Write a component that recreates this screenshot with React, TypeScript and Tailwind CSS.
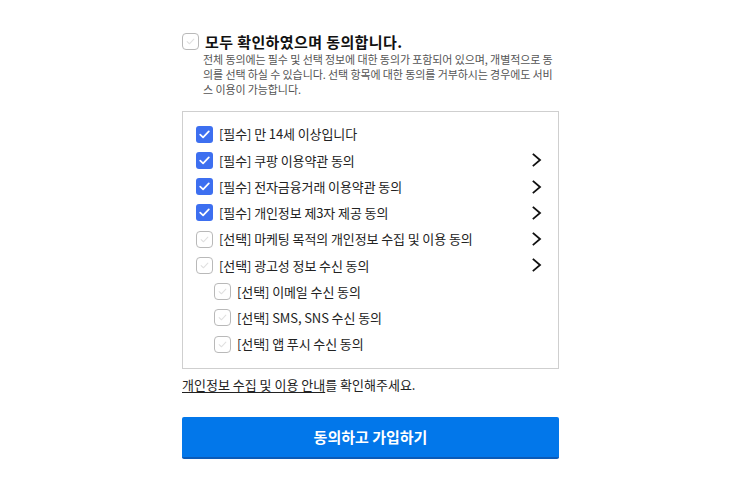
type Item = { label: string; tag: string; checked: boolean; arrow: boolean; sub?: boolean };

const ITEMS: Item[] = [
  { tag: '[필수]', label: '만 14세 이상입니다', checked: true, arrow: false },
  { tag: '[필수]', label: '쿠팡 이용약관 동의', checked: true, arrow: true },
  { tag: '[필수]', label: '전자금융거래 이용약관 동의', checked: true, arrow: true },
  { tag: '[필수]', label: '개인정보 제3자 제공 동의', checked: true, arrow: true },
  { tag: '[선택]', label: '마케팅 목적의 개인정보 수집 및 이용 동의', checked: false, arrow: true },
  { tag: '[선택]', label: '광고성 정보 수신 동의', checked: false, arrow: true },
  { tag: '[선택]', label: '이메일 수신 동의', checked: false, arrow: false, sub: true },
  { tag: '[선택]', label: 'SMS, SNS 수신 동의', checked: false, arrow: false, sub: true },
  { tag: '[선택]', label: '앱 푸시 수신 동의', checked: false, arrow: false, sub: true },
];

function Box({ checked }: { checked: boolean }) {
  if (checked) {
    return (
      <span className="flex h-[17px] w-[17px] shrink-0 items-center justify-center rounded-[3px] bg-[#3d6ff0]">
        <svg width="11" height="9" viewBox="0 0 11 9" fill="none">
          <path d="M1.2 4.6 4.1 7.4 9.8 1.4" stroke="white" strokeWidth="1.7" strokeLinecap="round" strokeLinejoin="round" />
        </svg>
      </span>
    );
  }
  return (
    <span className="flex h-[17px] w-[17px] shrink-0 items-center justify-center rounded-[4px] border border-[#b9b9b9] bg-white">
      <svg width="9" height="7" viewBox="0 0 11 9" fill="none">
        <path d="M1.2 4.6 4.1 7.4 9.8 1.4" stroke="#e0e0e0" strokeWidth="1.4" strokeLinecap="round" strokeLinejoin="round" />
      </svg>
    </span>
  );
}

function Chevron() {
  return (
    <svg width="10" height="14" viewBox="0 0 10 14" fill="none" className="shrink-0">
      <path d="M1.5 1.5 8 7 1.5 12.5" stroke="#111" strokeWidth="1.8" strokeLinecap="square" strokeLinejoin="miter" />
    </svg>
  );
}

export default function App() {
  return (
    <div className="min-h-[481px] bg-white text-[#111] [font-family:'Noto_Sans_CJK_KR','Noto_Sans',sans-serif]">
      <div className="ml-[182px] w-[377px] pt-[33px]">
        <div className="flex items-center">
          <Box checked={false} />
          <span className="ml-[6px] text-[15px] font-bold leading-[17px] tracking-[0.4px] text-[#111]">모두 확인하였으며 동의합니다.</span>
        </div>
        <p className="mt-[2px] ml-[21px] text-[11px] leading-[15px] tracking-[-0.1px] text-[#555]">
          전체 동의에는 필수 및 선택 정보에 대한 동의가 포함되어 있으며, 개별적으로 동의를 선택 하실 수 있습니다. 선택 항목에 대한 동의를 거부하시는 경우에도 서비스 이용이 가능합니다.
        </p>

        <div className="mt-[14px] border border-[#cfcfcf] pt-[9px] pb-[11px] pr-[16px] pl-[13px]">
          {ITEMS.map((it) => (
            <div key={it.label} className={`flex h-[26.25px] items-center ${it.sub ? 'pl-[18px]' : ''}`}>
              <Box checked={it.checked} />
              <span className="ml-[6px] flex-1 text-[13px] tracking-[-0.1px] text-[#222]">
                {it.tag} {it.label}
              </span>
              {it.arrow && <Chevron />}
            </div>
          ))}
        </div>

        <p className="mt-[8px] text-[13px] leading-[16px] tracking-[0px] text-[#222]">
          <span className="underline underline-offset-2">개인정보 수집 및 이용 안내</span>를 확인해주세요.
        </p>

        <button className="mt-[24px] flex h-[42px] w-full items-center justify-center rounded-[2px] border-b-2 border-[#0b5bb8] bg-[#0277ea] text-[15px] font-bold text-white">
          동의하고 가입하기
        </button>
      </div>
    </div>
  );
}
